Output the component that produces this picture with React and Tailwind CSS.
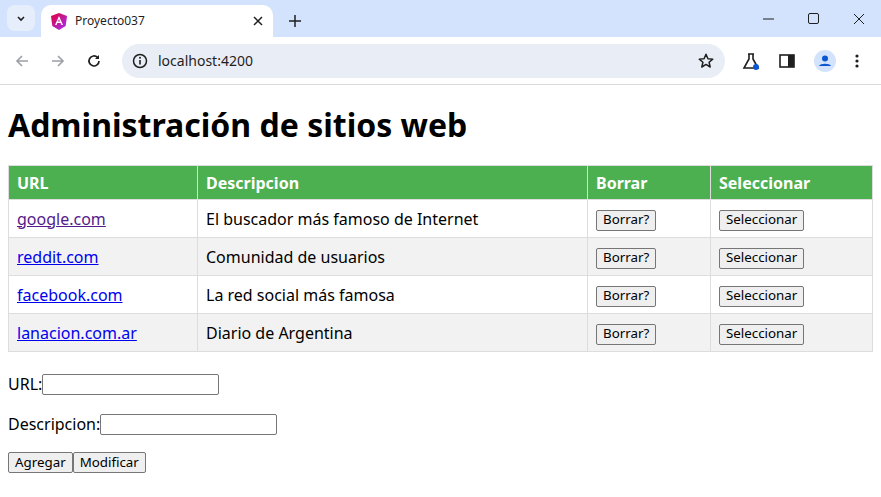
import React from "react";

const btn = "bg-[#efefef] border border-[#767676] rounded-[2px] px-[6px] h-[21px] text-[13.33px] leading-none text-black [font-family:'Liberation_Sans',Arial,sans-serif]";
const inp = "border border-[#767676] rounded-[2px] h-[21px] w-[177px] bg-white align-middle";

const rows = [
  ["google.com", "El buscador más famoso de Internet", true],
  ["reddit.com", "Comunidad de usuarios", false],
  ["facebook.com", "La red social más famosa", false],
  ["lanacion.com.ar", "Diario de Argentina", false],
];

export default function App() {
  return (
    <div className="w-[881px] h-[497px] overflow-hidden bg-white">
      {/* tab bar */}
      <div className="h-[37px] bg-[#d3e3fd] flex items-end relative [font-family:'Noto_Sans',sans-serif]">
        <div className="absolute left-[7px] top-[5px] w-[28px] h-[26px] rounded-lg bg-[#e6eefb] flex items-center justify-center">
          <svg width="10" height="10" viewBox="0 0 10 10"><path d="M2 4l3 3 3-3" stroke="#1f1f1f" strokeWidth="1.6" fill="none"/></svg>
        </div>
        <div className="ml-[41px] w-[232px] h-[32px] bg-white rounded-t-[10px] flex items-center px-[10px] gap-[8px]">
          <svg width="16" height="17" viewBox="0 0 16 17"><defs><linearGradient id="ag" x1="0" y1="0" x2="1" y2="1"><stop offset="0" stopColor="#e40035"/><stop offset="1" stopColor="#a033ff"/></linearGradient></defs><path d="M8 0L0 3l1.3 10L8 17l6.7-4L16 3z" fill="url(#ag)"/><path d="M8 3L4 12h1.6l.8-2h3.2l.8 2H12zM7 8.5L8 6l1 2.5z" fill="#fff"/></svg>
          <span className="text-[12px] text-[#1f1f1f] flex-1">Proyecto037</span>
          <svg width="10" height="10" viewBox="0 0 10 10"><path d="M1 1l8 8M9 1l-8 8" stroke="#1f1f1f" strokeWidth="1.5"/></svg>
        </div>
        <div className="ml-[16px] mb-[10px] text-[20px] leading-none text-[#1f1f1f]">
          <svg width="12" height="12" viewBox="0 0 12 12"><path d="M6 0v12M0 6h12" stroke="#1f1f1f" strokeWidth="1.5"/></svg>
        </div>
        <div className="absolute right-0 top-0 h-[37px] flex items-center">
          <div className="w-[45px] flex justify-center"><svg width="11" height="2"><path d="M0 1h11" stroke="#1f1f1f"/></svg></div>
          <div className="w-[45px] flex justify-center"><svg width="11" height="11"><rect x=".5" y=".5" width="10" height="10" rx="1.5" stroke="#1f1f1f" fill="none"/></svg></div>
          <div className="w-[45px] flex justify-center"><svg width="12" height="12"><path d="M1 1l10 10M11 1L1 11" stroke="#1f1f1f"/></svg></div>
        </div>
      </div>
      {/* toolbar */}
      <div className="h-[48px] bg-white border-b border-[#d9d9d9] flex items-center [font-family:'Noto_Sans',sans-serif]">
        <div className="w-[122px] flex items-center pl-[14px] gap-[20px]">
          <svg width="16" height="16" viewBox="0 0 16 16"><path d="M14 8H3M8 3L3 8l5 5" stroke="#9aa0a6" strokeWidth="1.6" fill="none"/></svg>
          <svg width="16" height="16" viewBox="0 0 16 16"><path d="M2 8h11M8 3l5 5-5 5" stroke="#9aa0a6" strokeWidth="1.6" fill="none"/></svg>
          <svg width="16" height="16" viewBox="0 0 16 16"><path d="M13 8a5 5 0 1 1-1.5-3.6" stroke="#1f1f1f" strokeWidth="1.7" fill="none"/><path d="M13 2v4H9z" fill="#1f1f1f"/></svg>
        </div>
        <div className="w-[603px] h-[34px] rounded-full bg-[#e9eef6] flex items-center px-[10px]">
          <svg width="16" height="16" viewBox="0 0 16 16"><circle cx="8" cy="8" r="6.5" stroke="#1f1f1f" strokeWidth="1.5" fill="none"/><path d="M8 7v4.5" stroke="#1f1f1f" strokeWidth="1.6"/><circle cx="8" cy="4.8" r="1" fill="#1f1f1f"/></svg>
          <span className="ml-[10px] text-[14px] text-[#1f1f1f] flex-1">localhost:4200</span>
          <svg width="18" height="18" viewBox="0 0 24 24"><path d="M12 3l2.6 6 6.4.5-4.9 4.2 1.5 6.3L12 16.6 6.4 20l1.5-6.3L3 9.5l6.4-.5z" stroke="#1f1f1f" strokeWidth="2" fill="none" strokeLinejoin="round"/></svg>
        </div>
        <div className="flex items-center ml-[17px] gap-[19px]">
          <svg width="18" height="18" viewBox="0 0 18 18"><path d="M6 2h6M7 2v5L2 16h14L11 7V2" stroke="#1f1f1f" strokeWidth="1.6" fill="none"/><circle cx="14" cy="15" r="3" fill="#0b57d0"/></svg>
          <svg width="16" height="16" viewBox="0 0 16 16"><rect x="1" y="2" width="14" height="12" stroke="#1f1f1f" strokeWidth="1.6" fill="none"/><rect x="9" y="2" width="6" height="12" fill="#1f1f1f"/></svg>
          <svg width="22" height="22" viewBox="0 0 22 22"><circle cx="11" cy="11" r="11" fill="#d3e3fd"/><circle cx="11" cy="8.5" r="3" fill="#0b57d0"/><path d="M5 16c1-3 11-3 12 0z" fill="#0b57d0"/></svg>
          <svg width="4" height="16" viewBox="0 0 4 16"><circle cx="2" cy="3" r="1.6" fill="#1f1f1f"/><circle cx="2" cy="8" r="1.6" fill="#1f1f1f"/><circle cx="2" cy="13" r="1.6" fill="#1f1f1f"/></svg>
        </div>
      </div>
      {/* page */}
      <div className="px-[8px] pt-[21px] [font-family:'Liberation_Serif','Times_New_Roman',serif] text-[16px] text-black">
        <h1 className="text-[32px] font-bold leading-[37px] mb-[22px]">Administración de sitios web</h1>
        <table className="w-full border-collapse">
          <thead>
            <tr className="bg-[#4caf50] text-white font-bold h-[34px]">
              <th className="text-left px-[8px] border border-[#ddd] w-[189px]">URL</th>
              <th className="text-left px-[8px] border border-[#ddd] w-[390px]">Descripcion</th>
              <th className="text-left px-[8px] border border-[#ddd] w-[123px]">Borrar</th>
              <th className="text-left px-[8px] border border-[#ddd]">Seleccionar</th>
            </tr>
          </thead>
          <tbody>
            {rows.map(([u, d, v], i) => (
              <tr key={u} className={`h-[38px] ${i % 2 === 1 ? "bg-[#f2f2f2]" : "bg-white"}`}>
                <td className="px-[8px] border border-[#ddd]"><a className={`underline ${v ? "text-[#551a8b]" : "text-[#0000ee]"}`}>{u}</a></td>
                <td className="px-[8px] border border-[#ddd]">{d}</td>
                <td className="px-[8px] border border-[#ddd]"><button className={btn}>Borrar?</button></td>
                <td className="px-[8px] border border-[#ddd]"><button className={btn}>Seleccionar</button></td>
              </tr>
            ))}
          </tbody>
        </table>
        <p className="mt-[20px] flex items-center">URL:<input className={inp} /></p>
        <p className="mt-[16px] flex items-center">Descripcion:<input className={inp} /></p>
        <p className="mt-[16px] flex items-center"><button className={btn}>Agregar</button><button className={btn}>Modificar</button></p>
      </div>
    </div>
  );
}
